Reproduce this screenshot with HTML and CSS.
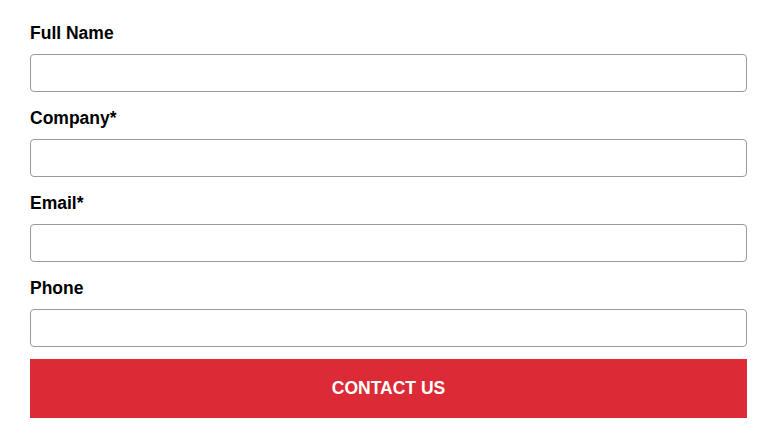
FILE: index.html
```html
<!DOCTYPE html>
<html lang="en">

<head>
    <meta charset="UTF-8">
    <meta name="viewport" content="width=device-width, initial-scale=1.0">
    <title>Contact Form</title>
    <link rel="stylesheet" href="styles.css">
</head>

<body>
    <form class="contact-form">
        <div class="field">
            <label for="full-name">Full Name</label>
            <input type="text" id="full-name" name="full-name">
        </div>
        <div class="field">
            <label for="company">Company*</label>
            <input type="text" id="company" name="company">
        </div>
        <div class="field">
            <label for="email">Email*</label>
            <input type="email" id="email" name="email">
        </div>
        <div class="field">
            <label for="phone">Phone</label>
            <input type="tel" id="phone" name="phone">
        </div>
        <button type="submit" class="submit-button">CONTACT US</button>
    </form>
</body>

</html>
```

FILE: styles.css
```css
body {
    font-family: 'Liberation Sans', Arial, sans-serif;
    margin: 0;
    padding: 22px 25px 0 30px;
    background: #fff;
    color: #000;
}

.contact-form {
    display: flex;
    flex-direction: column;
    width: 717px;
}

.field {
    display: flex;
    flex-direction: column;
    margin-bottom: 15px;
}

.field:last-of-type {
    margin-bottom: 12px;
}

.field label {
    font-size: 17.5px;
    font-weight: bold;
    line-height: 22px;
    margin-bottom: 10px;
}

.field input {
    box-sizing: border-box;
    height: 38px;
    width: 100%;
    margin: 0;
    padding: 0 10px;
    border: 1px solid #9a9a9a;
    border-radius: 4px;
    background: #fff;
    font-family: inherit;
    font-size: 16px;
}

.submit-button {
    height: 59px;
    width: 100%;
    border: none;
    border-radius: 0;
    background: #dc2b36;
    color: #fff;
    font-family: inherit;
    font-size: 17.5px;
    font-weight: bold;
    cursor: pointer;
}
```
